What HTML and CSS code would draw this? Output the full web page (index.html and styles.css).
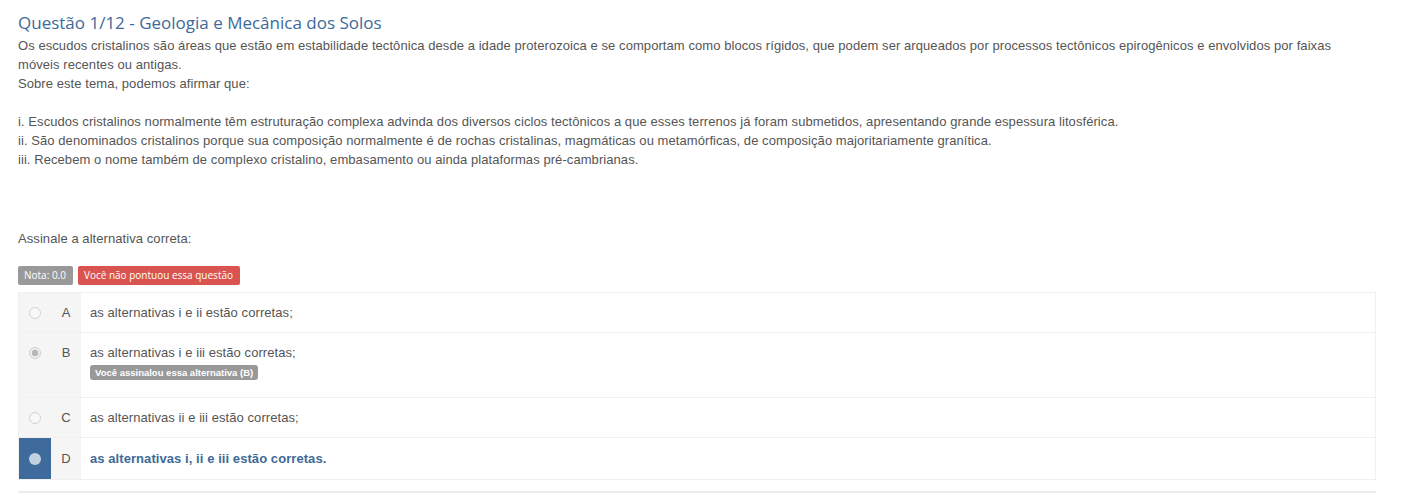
FILE: index.html
```html
<!DOCTYPE html>
<html lang="pt">
<head>
<meta charset="utf-8">
<title>Questão 1/12</title>
<link rel="stylesheet" href="styles.css">
</head>
<body>
<div class="question">
  <h2 class="q-title">Questão 1/12 - Geologia e Mecânica dos Solos</h2>
  <div class="q-text">
    <p>Os escudos cristalinos são áreas que estão em estabilidade tectônica desde a idade proterozoica e se comportam como blocos rígidos, que podem ser arqueados por processos tectônicos epirogênicos e envolvidos por faixas móveis recentes ou antigas.<br>Sobre este tema, podemos afirmar que:</p>
    <p>i. Escudos cristalinos normalmente têm estruturação complexa advinda dos diversos ciclos tectônicos a que esses terrenos já foram submetidos, apresentando grande espessura litosférica.<br>ii. São denominados cristalinos porque sua composição normalmente é de rochas cristalinas, magmáticas ou metamórficas, de composição majoritariamente granítica.<br>iii. Recebem o nome também de complexo cristalino, embasamento ou ainda plataformas pré-cambrianas.</p>
    <p class="q-ask">Assinale a alternativa correta:</p>
  </div>
  <div class="badges">
    <span class="badge badge-grey">Nota: 0.0</span>
    <span class="badge badge-red">Você não pontuou essa questão</span>
  </div>
  <table class="alts">
    <tr class="alt">
      <td class="c-radio"><span class="radio"></span></td>
      <td class="c-letter">A</td>
      <td class="c-text">as alternativas i e ii estão corretas;</td>
    </tr>
    <tr class="alt alt-b">
      <td class="c-radio"><span class="radio radio-checked"></span></td>
      <td class="c-letter">B</td>
      <td class="c-text">as alternativas i e iii estão corretas;<br><span class="mark">Você assinalou essa alternativa (B)</span></td>
    </tr>
    <tr class="alt">
      <td class="c-radio"><span class="radio"></span></td>
      <td class="c-letter">C</td>
      <td class="c-text">as alternativas ii e iii estão corretas;</td>
    </tr>
    <tr class="alt alt-correct">
      <td class="c-radio"><span class="radio radio-correct"></span></td>
      <td class="c-letter">D</td>
      <td class="c-text">as alternativas i, ii e iii estão corretas.</td>
    </tr>
  </table>
  <hr class="sep">
</div>
</body>
</html>
```
FILE: styles.css
```css
html, body {
  margin: 0;
  padding: 0;
  background: #fff;
}
body {
  font-family: "Liberation Sans", Arial, sans-serif;
  font-size: 13px;
  line-height: 19px;
  color: #555;
}
.question {
  width: 1358px;
  padding: 11px 0 0 18px;
}
.q-title {
  margin: 0;
  font-family: "Open Sans", sans-serif;
  font-weight: 400;
  font-size: 17px;
  line-height: 24px;
  color: #3d6a99;
}
.q-text {
  padding-top: 1px;
  letter-spacing: 0.07px;
}
.q-text p {
  margin: 0 0 19px 0;
}
.q-text p.q-ask {
  margin: 60px 0 0 0;
}
.badges {
  display: flex;
  gap: 5px;
  margin-top: 18px;
  height: 19px;
}
.badge {
  display: inline-block;
  font-family: "Open Sans", sans-serif;
  font-size: 10px;
  line-height: 19px;
  height: 19px;
  padding: 0 7px 0 6px;
  border-radius: 2px;
  color: #fff;
}
.badge-grey { background: #999; }
.badge-red { background: #d9534f; }
.alts {
  margin-top: 7px;
  width: 1358px;
  border-collapse: collapse;
  border: 1px solid #f0f0f0;
}
.alt td {
  border-top: 1px solid #f0f0f0;
  padding: 0;
  vertical-align: top;
}
.c-radio {
  width: 32px;
  background: #f5f5f5;
  text-align: center;
}
.c-letter {
  width: 30px;
  background: #f5f5f5;
  text-align: center;
  padding: 10px 0 !important;
  color: #555;
}
.c-text {
  padding: 10px 10px 10px 9px !important;
  letter-spacing: 0.07px;
}
.alt-b .c-text {
  padding-bottom: 16px !important;
}
.radio {
  display: inline-block;
  box-sizing: border-box;
  width: 12px;
  height: 12px;
  margin-top: 14px;
  border-radius: 50%;
  border: 1px solid #d3d3d3;
  background: #f8f8f8;
}
.radio-checked {
  background: radial-gradient(circle, #b8b8b8 0 3px, #f0f0f0 3.6px);
  border-color: #cfcfcf;
}
.alt-correct .c-radio {
  background: #3e6b9b;
}
.radio-correct {
  width: 12px;
  height: 12px;
  border: none;
  background: #c3d0df;
  margin-top: 15px;
}
.alt-correct .c-letter {
  padding: 11px 0 !important;
}
.alt-correct .c-text {
  padding: 11px 10px 11px 9px !important;
  font-weight: bold;
  color: #3d6a99;
}
.mark {
  display: inline-block;
  margin-top: 3px;
  background: #999;
  color: #fff;
  font-weight: bold;
  font-size: 9.5px;
  line-height: 15px;
  letter-spacing: 0;
  padding: 0 5px;
  border-radius: 3px;
}
.sep {
  margin: 11px 0 0 0;
  width: 1358px;
  border: none;
  border-top: 2px solid #ececec;
}
```
